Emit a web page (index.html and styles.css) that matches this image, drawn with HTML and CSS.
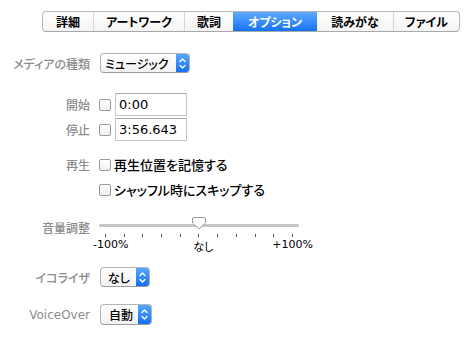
FILE: index.html
```html
<!DOCTYPE html>
<html lang="ja">
<head>
    <meta charset="UTF-8">
    <title>オプション</title>
    <link rel="stylesheet" href="styles.css">
</head>
<body>
    <nav class="tabs">
        <span class="tab t1">詳細</span>
        <span class="tab t2">アートワーク</span>
        <span class="tab t3">歌詞</span>
        <span class="tab t4 active">オプション</span>
        <span class="tab t5">読みがな</span>
        <span class="tab t6">ファイル</span>
    </nav>

    <main class="form">
        <div class="row row-media">
            <label>メディアの種類</label>
            <div class="popup popup-media">
                <span class="value">ミュージック</span>
                <span class="arrows"><svg width="13" height="19" viewBox="0 0 13 19"><path d="M4 7.5 L6.5 5 L9 7.5 M4 11.5 L6.5 14 L9 11.5" fill="none" stroke="#fff" stroke-width="1.4" stroke-linecap="round" stroke-linejoin="round"/></svg></span>
            </div>
        </div>

        <div class="row row-start">
            <label>開始</label>
            <div class="field-line">
                <span class="check"></span>
                <span class="field">0:00</span>
            </div>
        </div>
        <div class="row row-stop">
            <label>停止</label>
            <div class="field-line">
                <span class="check"></span>
                <span class="field">3:56.643</span>
            </div>
        </div>

        <div class="row row-play">
            <label>再生</label>
            <div class="check-line"><span class="check"></span>再生位置を記憶する</div>
        </div>
        <div class="row row-shuffle">
            <label></label>
            <div class="check-line"><span class="check"></span>シャッフル時にスキップする</div>
        </div>

        <div class="row row-volume">
            <label>音量調整</label>
            <div class="slider">
                <div class="track"></div>
                <svg class="thumb" width="14" height="13" viewBox="0 0 14 13"><path d="M2 0.5 H12 Q13.5 0.5 13.5 2 V6 L7 12 L0.5 6 V2 Q0.5 0.5 2 0.5 Z" fill="#fff" stroke="#9a9a9a" stroke-width="1"/></svg>
                <div class="ticks">
                    <i></i><i></i><i></i><i></i><i></i><i></i><i></i><i></i><i></i><i></i><i></i>
                </div>
                <div class="scale">
                    <span>-100%</span>
                    <span>なし</span>
                    <span>+100%</span>
                </div>
            </div>
        </div>

        <div class="row row-eq">
            <label>イコライザ</label>
            <div class="popup popup-eq">
                <span class="value">なし</span>
                <span class="arrows"><svg width="13" height="19" viewBox="0 0 13 19"><path d="M4 7.5 L6.5 5 L9 7.5 M4 11.5 L6.5 14 L9 11.5" fill="none" stroke="#fff" stroke-width="1.4" stroke-linecap="round" stroke-linejoin="round"/></svg></span>
            </div>
        </div>

        <div class="row row-vo">
            <label>VoiceOver</label>
            <div class="popup popup-vo">
                <span class="value">自動</span>
                <span class="arrows"><svg width="13" height="19" viewBox="0 0 13 19"><path d="M4 7.5 L6.5 5 L9 7.5 M4 11.5 L6.5 14 L9 11.5" fill="none" stroke="#fff" stroke-width="1.4" stroke-linecap="round" stroke-linejoin="round"/></svg></span>
            </div>
        </div>
    </main>
</body>
</html>
```

FILE: styles.css
```css
body {
    margin: 0;
    padding: 0;
    background-color: #ffffff;
    font-family: "DejaVu Sans", "Noto Sans CJK JP", sans-serif;
    font-size: 12px;
    color: #000;
    width: 470px;
    height: 340px;
    overflow: hidden;
    white-space: nowrap;
    font-feature-settings: "palt";
}

/* Tab bar */
.tabs {
    display: flex;
    margin: 11px 0 0 42px;
    width: 418px;
    height: 21px;
    box-sizing: border-box;
    border: 1px solid #b9b9b9;
    border-bottom-color: #a8a8a8;
    border-radius: 4px;
    background: linear-gradient(#ffffff, #f4f4f4);
    overflow: hidden;
}
.tab {
    display: flex;
    align-items: center;
    justify-content: center;
    font-weight: bold;
    font-size: 12px;
    border-left: 1px solid #d6d6d6;
    box-sizing: border-box;
}
.tab.t1 { width: 50px; border-left: none; }
.tab.t2 { width: 91px; }
.tab.t3 { width: 49px; }
.tab.t4 { width: 84px; }
.tab.t5 { width: 76px; }
.tab.t6 { flex: 1; }
.tab.active {
    background: linear-gradient(#5eabfc, #1672f6);
    color: #ffffff;
    border-left: none;
}
.tab.active + .tab {
    border-left: none;
}

/* Form rows */
.form {
    display: flex;
    flex-direction: column;
}
.row {
    display: grid;
    grid-template-columns: 90px 1fr;
    column-gap: 9px;
    align-items: center;
}
.row label {
    text-align: right;
    color: #8c8c8c;
    font-size: 12px;
    font-weight: 500;
}
.row-media { margin-top: 21px; height: 20px; }
.row-start { margin-top: 20px; height: 23px; }
.row-stop { margin-top: 2px; height: 23px; }
.row-play { margin-top: 14px; height: 18px; }
.row-shuffle { margin-top: 7px; height: 18px; }
.row-volume { margin-top: 19px; align-items: start; }
.row-volume label { margin-top: 2px; }
.row-eq { margin-top: 13px; height: 20px; }
.row-vo { margin-top: 17px; height: 21px; }

/* Popup buttons */
.popup {
    display: flex;
    align-items: stretch;
    height: 20px;
    box-sizing: border-box;
    border: 1px solid #b4b4b4;
    border-bottom-color: #9c9c9c;
    border-radius: 4px;
    overflow: hidden;
    background: linear-gradient(#ffffff, #f2f2f2);
    margin-left: 1px;
}
.popup .value {
    display: flex;
    align-items: center;
    flex: 1;
    padding-left: 6px;
    font-size: 12px;
    font-weight: 500;
    overflow: hidden;
}
.popup .arrows {
    display: flex;
    align-items: center;
    width: 13px;
    flex-shrink: 0;
    background: linear-gradient(#57a6fb, #1570f6);
}
.popup-media { width: 90px; }
.popup-media .value { padding-left: 4px; }
.popup-eq { width: 50px; }
.popup-eq .value { padding-left: 7px; }
.popup-vo { width: 52px; height: 21px; }
.popup-vo .value { padding-left: 8px; }

/* Checkboxes and fields */
.check {
    display: inline-block;
    width: 10px;
    height: 10px;
    border: 1px solid #9b9b9b;
    border-radius: 2px;
    background: linear-gradient(#ffffff, #f0f0f0);
    flex-shrink: 0;
}
.field-line {
    display: flex;
    align-items: center;
    gap: 4px;
}
.field {
    display: flex;
    align-items: center;
    width: 72px;
    height: 23px;
    box-sizing: border-box;
    border: 1px solid #c4c4c4;
    border-top-color: #a9a9a9;
    padding-left: 3px;
    font-size: 13px;
}
.check-line {
    display: flex;
    align-items: center;
    gap: 3px;
    font-size: 13px;
    font-weight: 500;
}

/* Volume slider */
.slider {
    position: relative;
    width: 200px;
    padding-top: 7px;
}
.track {
    height: 3px;
    border-radius: 2px;
    background-color: #c6c6c6;
}
.thumb {
    position: absolute;
    left: 93px;
    top: 0;
}
.ticks {
    display: flex;
    justify-content: space-between;
    margin: 7px 6px 0 6px;
}
.ticks i {
    display: block;
    width: 1px;
    height: 3px;
    background-color: #555;
}
.scale {
    display: flex;
    justify-content: space-between;
    font-size: 11px;
    width: 220px;
    margin-left: -6px;
    margin-top: 1px;
}
.scale span:nth-child(2) {
    margin-left: 6px;
}
```
